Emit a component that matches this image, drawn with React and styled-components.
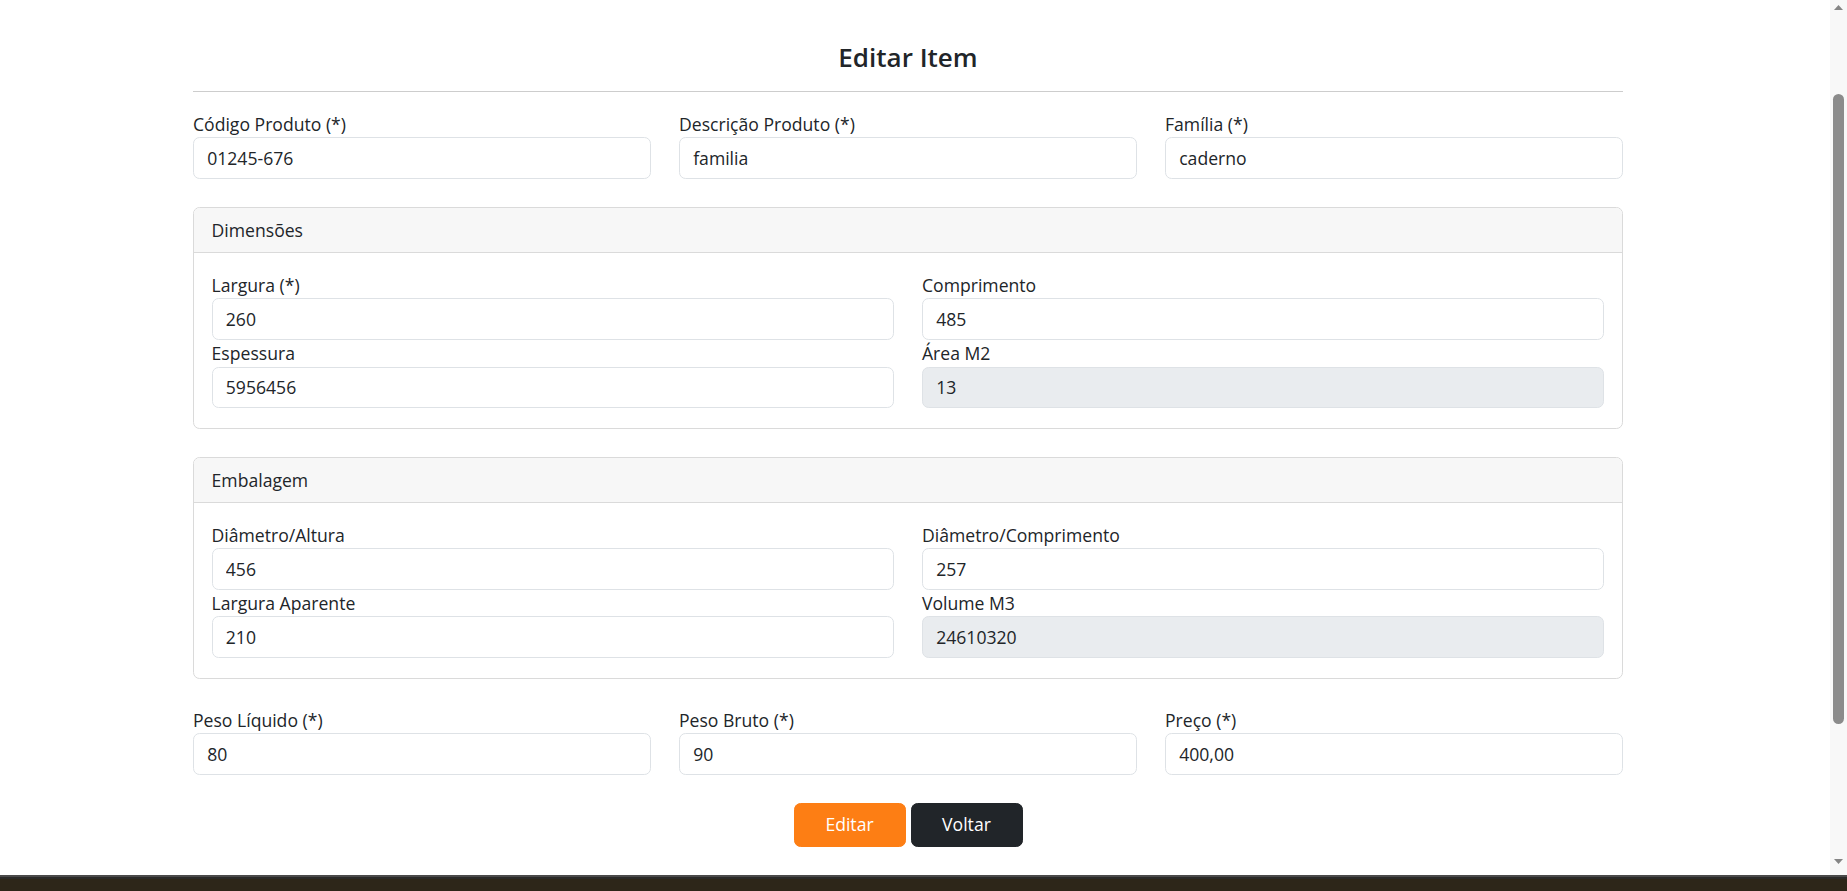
import React from "react";
import styled, { createGlobalStyle } from "styled-components";

const GlobalStyle = createGlobalStyle`
  html, body { margin: 0; height: 100%; overflow: hidden; }
  body {
    font-family: "Open Sans", "Noto Sans", "Liberation Sans", sans-serif;
    color: #212529;
    background: #ffffff;
  }
  #root { height: 100%; }
  * { box-sizing: border-box; }
`;

const Shell = styled.div`
  display: flex;
  flex-direction: column;
  height: 100vh;
`;

const Viewport = styled.div`
  flex: 1;
  min-height: 0;
  display: flex;
`;

const Main = styled.main`
  flex: 1;
  min-width: 0;
  overflow: hidden;
  background: #ffffff;
`;

const Rail = styled.div`
  flex: 0 0 17px;
  display: flex;
  flex-direction: column;
  align-items: center;
  background: #f8f8f8;
`;

const RailButton = styled.div`
  flex: 0 0 14px;
  display: flex;
  align-items: center;
  justify-content: center;
  margin-bottom: ${(p) => (p.$end ? "7px" : "0")};
`;

const Track = styled.div`
  flex: 1;
  padding-top: 80px;
`;

const Thumb = styled.div`
  width: 11px;
  height: 630px;
  border-radius: 6px;
  background: #8b8b8b;
`;

const Taskbar = styled.div`
  flex: 0 0 16px;
  background: linear-gradient(#4a4a4a 0 2px, #2b2a28 2px 4px, #2d2619 4px);
`;

const Page = styled.div`
  width: 1430px;
  margin-left: 193px;
  padding: 42px 0 40px;
`;

const Title = styled.h4`
  margin: 0;
  text-align: center;
  font-size: 26px;
  line-height: 31.7px;
  font-weight: 600;
  color: #212529;
`;

const Rule = styled.hr`
  margin: 17px 0 19px;
  border: 0;
  border-top: 1px solid #cdcdcd;
`;

const Form = styled.form`
  display: flex;
  flex-direction: column;
  gap: 28px;
`;

const Row = styled.div`
  display: grid;
  grid-template-columns: repeat(${(p) => p.$cols}, 1fr);
  column-gap: 28px;
`;

const Field = styled.div`
  display: flex;
  flex-direction: column;
`;

const Label = styled.label`
  font-size: 17.6px;
  line-height: 26.4px;
  color: #212529;
`;

const Input = styled.input`
  width: 100%;
  height: 41.8px;
  padding: 6.6px 13.2px;
  font-family: inherit;
  font-size: 17.6px;
  line-height: 26.4px;
  color: #212529;
  background: ${(p) => (p.disabled ? "#e9ecef" : "#ffffff")};
  border: 1px solid #dee2e6;
  border-radius: 6.6px;
  outline: none;
  -webkit-text-fill-color: #212529;
  opacity: 1;
`;

const Card = styled.section`
  border: 1px solid #dadada;
  border-radius: 6.6px;
  overflow: hidden;
`;

const CardHeader = styled.div`
  padding: 8.8px 17.6px;
  font-size: 17.6px;
  line-height: 26.4px;
  background: #f7f7f7;
  border-bottom: 1px solid #dadada;
`;

const CardBody = styled.div`
  padding: 19px 17.6px 19.4px;
`;

const Actions = styled.div`
  display: flex;
  justify-content: center;
  gap: 5px;
`;

const Button = styled.button`
  width: 112px;
  height: 43.8px;
  font-family: inherit;
  font-size: 17.6px;
  line-height: 26.4px;
  color: #ffffff;
  background: ${(p) => (p.$variant === "dark" ? "#212529" : "#fd7e14")};
  border: 1px solid ${(p) => (p.$variant === "dark" ? "#212529" : "#fd7e14")};
  border-radius: 6.6px;
  cursor: pointer;
`;

function Arrow({ down }) {
  return (
    <svg width="9" height="5" viewBox="0 0 9 5" aria-hidden="true">
      <path d={down ? "M0 0 L4.5 5 L9 0Z" : "M0 5 L4.5 0 L9 5Z"} fill="#858585" />
    </svg>
  );
}

function FormField({ label, value, disabled }) {
  return (
    <Field>
      <Label>{label}</Label>
      <Input defaultValue={value} disabled={disabled} />
    </Field>
  );
}

export default function App() {
  return (
    <>
      <GlobalStyle />
      <Shell>
        <Viewport>
          <Main>
            <Page>
              <Title>Editar Item</Title>
              <Rule />
              <Form onSubmit={(e) => e.preventDefault()}>
                <Row $cols={3}>
                  <FormField label="Código Produto (*)" value="01245-676" />
                  <FormField label="Descrição Produto (*)" value="familia" />
                  <FormField label="Família (*)" value="caderno" />
                </Row>

                <Card>
                  <CardHeader>Dimensões</CardHeader>
                  <CardBody>
                    <Row $cols={2}>
                      <FormField label="Largura (*)" value="260" />
                      <FormField label="Comprimento" value="485" />
                      <FormField label="Espessura" value="5956456" />
                      <FormField label="Área M2" value="13" disabled />
                    </Row>
                  </CardBody>
                </Card>

                <Card>
                  <CardHeader>Embalagem</CardHeader>
                  <CardBody>
                    <Row $cols={2}>
                      <FormField label="Diâmetro/Altura" value="456" />
                      <FormField label="Diâmetro/Comprimento" value="257" />
                      <FormField label="Largura Aparente" value="210" />
                      <FormField label="Volume M3" value="24610320" disabled />
                    </Row>
                  </CardBody>
                </Card>

                <Row $cols={3}>
                  <FormField label="Peso Líquido (*)" value="80" />
                  <FormField label="Peso Bruto (*)" value="90" />
                  <FormField label="Preço (*)" value="400,00" />
                </Row>

                <Actions>
                  <Button type="submit">Editar</Button>
                  <Button type="button" $variant="dark">Voltar</Button>
                </Actions>
              </Form>
            </Page>
          </Main>
          <Rail>
            <RailButton><Arrow /></RailButton>
            <Track><Thumb /></Track>
            <RailButton $end><Arrow down /></RailButton>
          </Rail>
        </Viewport>
        <Taskbar />
      </Shell>
    </>
  );
}
